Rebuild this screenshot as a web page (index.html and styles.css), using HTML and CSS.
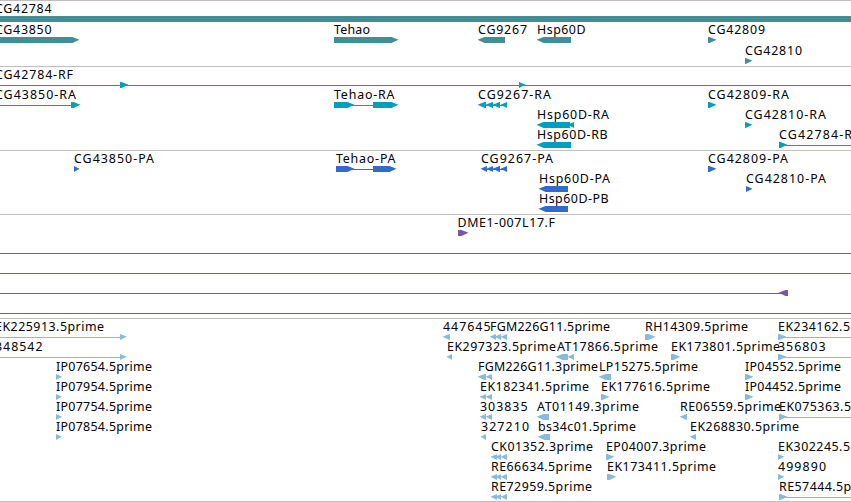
FILE: index.html
```html
<!DOCTYPE html>
<html lang="en">
<head>
    <meta charset="UTF-8">
    <meta name="viewport" content="width=device-width, initial-scale=1.0">
    <title>Genome Browser</title>
    <link rel="stylesheet" href="styles.css">
</head>
<body>
    <main class="browser">
        <svg class="track gene" id="gene"></svg>
        <svg class="track transcript" id="transcript"></svg>
        <svg class="track protein" id="protein"></svg>
        <svg class="track bac" id="bac"></svg>
        <svg class="track est" id="est"></svg>
    </main>
    <script src="tracks.js"></script>
</body>
</html>
```

FILE: styles.css
```css
body {
    margin: 0;
    background-color: #ffffff;
    overflow: hidden;
}
.browser {
    display: flex;
    flex-direction: column;
    width: 851px;
    border-bottom: 1px solid #bebebe;
}
.track {
    display: block;
    box-sizing: border-box;
    width: 100%;
    border-top: 1px solid #bebebe;
    overflow: hidden;
}
.gene {
    height: 66px;
    fill: #3f8f94;
}
.transcript {
    height: 84px;
    fill: #009fc0;
}
.protein {
    height: 64px;
    fill: #316ccd;
}
.bac {
    height: 104px;
    fill: #7558a8;
}
.est {
    height: 183px;
    fill: #87bbdd;
}
.label {
    font-family: "Noto Sans", "Open Sans", sans-serif;
    font-size: 12.4px;
    fill: #000000;
}
```

FILE: tracks.js
```js
// feature: [row, label, label start, label end, direction, exons, intron line]
const tracks = {
    gene: [
        [0, 'CG42784', -5, 51.5, '', [[-10, 861]]],
        [1, 'CG43850', -5, 51.5, '>', [[-10, 79]]],
        [1, 'Tehao', 334, 370, '>', [[334, 398]]],
        [1, 'CG9267', 478, 527, '<', [[478, 505]]],
        [1, 'Hsp60D', 537, 585.5, '<', [[537, 571]]],
        [1, 'CG42809', 708, 765, '>', [[708, 716]]],
        [2, 'CG42810', 745, 802, '>', [[745, 752]]]
    ],
    transcript: [
        [0, 'CG42784-RF', -5, 73, '>', [[120, 128], [519, 525]], [-10, 861]],
        [1, 'CG43850-RA', -5, 76, '>', [[71, 80]], [-10, 72]],
        [1, 'Tehao-RA', 334, 394.5, '>', [[334, 354], [373, 398]], [350, 375]],
        [1, 'CG9267-RA', 478, 551, '<', [[478, 486], [486, 493], [493, 500], [501, 507]], [480, 505]],
        [2, 'Hsp60D-RA', 537, 609, '<', [[537, 570], [568, 574]]],
        [3, 'Hsp60D-RB', 537, 607.5, '<', [[537, 571]]],
        [1, 'CG42809-RA', 708, 789, '>', [[708, 716]]],
        [2, 'CG42810-RA', 745, 826, '>', [[745, 752]]],
        [3, 'CG42784-R', 779, 852, '>', [[779, 787]], [785, 861]]
    ],
    protein: [
        [0, 'CG43850-PA', 74, 154, '>', [[74, 79]]],
        [0, 'Tehao-PA', 336, 395.5, '>', [[336, 354], [373, 396]], [350, 375]],
        [0, 'CG9267-PA', 481, 553, '<', [[481, 487], [487, 493], [493, 500], [501, 507]], [483, 505]],
        [1, 'Hsp60D-PA', 539, 610, '<', [[539, 568]]],
        [2, 'Hsp60D-PB', 539, 608.5, '<', [[539, 568]]],
        [0, 'CG42809-PA', 708, 788, '>', [[708, 716]]],
        [1, 'CG42810-PA', 746, 826, '>', [[746, 752]]]
    ],
    bac: [
        [0, 'DME1-007L17.F', 457.5, 555, '>', [[458, 468]]],
        [1, '', 0, 0, '', [], [-10, 861]],
        [2, '', 0, 0, '', [], [-10, 861]],
        [3, '', 0, 0, '<', [[779, 788]], [-10, 781]],
        [4, '', 0, 0, '', [], [-10, 861]]
    ],
    est: [
        [0, 'EK225913.5prime', -5, 104, '>', [[120, 126.5]], [-10, 121]],
        [1, '348542', -5, 42.5, '>', [[120, 126.5]], [-10, 121]],
        [2, 'IP07654.5prime', 56, 152, '>', [[56, 61.5]]],
        [3, 'IP07954.5prime', 56, 152, '>', [[56, 61.5]]],
        [4, 'IP07754.5prime', 56, 152, '>', [[56, 61.5]]],
        [5, 'IP07854.5prime', 56, 152, '>', [[56, 61.5]]],
        [0, '447645', 443, 490.5, '<', [[443, 450]]],
        [0, 'FGM226G11.5prime', 490, 610, '<', [[490, 496], [495, 501], [501, 507]]],
        [0, 'RH14309.5prime', 645, 748, '>', [[645, 655]]],
        [0, 'EK234162.5prime', 778, 887, '>', [[778, 786]], [784, 861]],
        [1, 'EK297323.5prime', 447, 556, '<', [[447, 452]]],
        [1, 'AT17866.5prime', 557, 658, '<', [[556, 568], [568, 574]]],
        [1, 'EK173801.5prime', 671, 780, '>', [[671, 680]]],
        [1, '356803', 778, 825.5, '>', [[778, 786]], [784, 861]],
        [2, 'FGM226G11.3prime', 478, 598, '<', [[478, 486], [486, 492]]],
        [2, 'LP15275.5prime', 599, 698, '<', [[599, 611]]],
        [2, 'IP04552.5prime', 745, 841, '>', [[745, 753]]],
        [3, 'EK182341.5prime', 480, 589, '<', [[480, 486], [486, 492]]],
        [3, 'EK177616.5prime', 601, 710, '>', [[601, 609]]],
        [3, 'IP04452.5prime', 745, 841, '>', [[745, 753]]],
        [4, '303835', 480, 527.5, '<', [[480, 486], [486, 492]]],
        [4, 'AT01149.3prime', 537, 639, '<', [[537, 549]]],
        [4, 'RE06559.5prime', 680, 781, '<', [[680, 687]]],
        [4, 'EK075363.5prime', 779, 888, '>', [[779, 787]], [785, 861]],
        [5, '327210', 481, 529, '<', [[481, 486]]],
        [5, 'bs34c01.5prime', 538, 636, '<', [[538, 550]]],
        [5, 'EK268830.5prime', 690, 799, '<', [[690, 696]]],
        [6, 'CK01352.3prime', 491, 593, '<', [[491, 497], [496, 501], [501, 507]]],
        [6, 'EP04007.3prime', 606, 706, '>', [[606, 614]]],
        [6, 'EK302245.5prime', 778, 887, '>', [[778, 784]]],
        [7, 'RE66634.5prime', 491, 592, '<', [[491, 497], [496, 501], [501, 507]]],
        [7, 'EK173411.5prime', 607, 716, '>', [[607, 616]]],
        [7, '499890', 778, 826, '>', [[778, 784]]],
        [8, 'RE72959.5prime', 491, 592, '<', [[491, 497], [496, 501], [501, 507]]],
        [8, 'RE57444.5prime', 779, 880, '>', [[779, 787]], [785, 861]]
    ]
};

function add(svg, name, attrs) {
    const el = document.createElementNS('http://www.w3.org/2000/svg', name);
    for (const key in attrs) {
        el.setAttribute(key, attrs[key]);
    }
    svg.appendChild(el);
    return el;
}

function exonPoints(start, end, top, direction) {
    const head = Math.min(6.5, end - start);
    const mid = top + 2.8;
    const bottom = top + 6;
    if (direction === '>') {
        return `${start},${top} ${end - head},${top} ${end + 0.5},${mid} ${end - head},${bottom} ${start},${bottom}`;
    }
    if (direction === '<') {
        return `${end},${top} ${start + head},${top} ${start - 0.5},${mid} ${start + head},${bottom} ${end},${bottom}`;
    }
    return `${start},${top} ${end},${top} ${end},${bottom} ${start},${bottom}`;
}

for (const id in tracks) {
    const svg = document.getElementById(id);
    const rowHeight = id === 'gene' ? 21 : 20;

    tracks[id].forEach(([row, label, from, to, direction, exons, intron]) => {
        const y = row * rowHeight;
        if (intron) {
            add(svg, 'rect', { x: intron[0], y: y + 18, width: intron[1] - intron[0], height: 1 });
        }
        exons.forEach(([start, end]) => {
            add(svg, 'polygon', { points: exonPoints(start, end, y + 15, direction) });
        });
        if (label) {
            const text = add(svg, 'text', { class: 'label', x: from, y: y + 12, textLength: to - from });
            text.textContent = label;
        }
    });
}
```
